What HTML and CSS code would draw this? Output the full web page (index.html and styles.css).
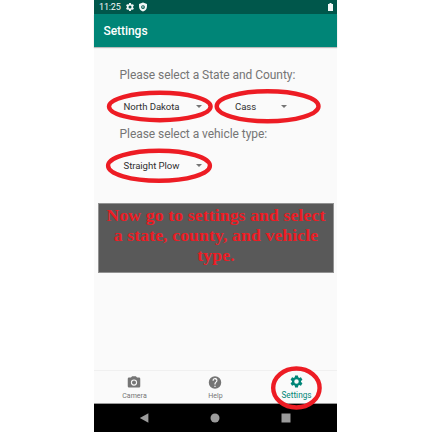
FILE: index.html
```html
<!DOCTYPE html>
<html lang="en">
<head>
<meta charset="utf-8">
<title>Settings</title>
<link rel="stylesheet" href="styles.css">
</head>
<body>
<svg class="defs" width="0" height="0" aria-hidden="true">
  <symbol id="gear" viewBox="0 0 24 24"><path d="M19.14 12.94c.04-.3.06-.61.06-.94 0-.32-.02-.64-.07-.94l2.03-1.58a.49.49 0 0 0 .12-.61l-1.92-3.32a.49.49 0 0 0-.59-.22l-2.39.96c-.5-.38-1.03-.7-1.62-.94l-.36-2.54a.48.48 0 0 0-.48-.41h-3.84a.47.47 0 0 0-.47.41l-.36 2.54c-.59.24-1.13.57-1.62.94l-2.39-.96a.48.48 0 0 0-.59.22L2.74 8.87a.47.47 0 0 0 .12.61l2.03 1.58c-.05.3-.09.63-.09.94s.02.64.07.94l-2.03 1.58a.49.49 0 0 0-.12.61l1.92 3.32c.12.22.37.29.59.22l2.39-.96c.5.38 1.03.7 1.62.94l.36 2.54c.05.24.24.41.48.41h3.84c.24 0 .44-.17.47-.41l.36-2.54c.59-.24 1.13-.56 1.62-.94l2.39.96c.22.08.47 0 .59-.22l1.92-3.32a.47.47 0 0 0-.12-.61zM12 15.6A3.6 3.6 0 1 1 12 8.4a3.6 3.6 0 0 1 0 7.2z"/></symbol>
</svg>
<div class="phone">
  <header class="status">
    <span class="time">11:25</span>
    <svg class="status-gear"><use href="#gear"/></svg>
    <svg class="shield" viewBox="0 0 24 24"><path fill-rule="evenodd" d="M12 1 2.500 4.500V11c0 5.600 3.800 10.700 9.500 12 5.700-1.300 9.500-6.400 9.500-12V4.500zM12 7.500a4.500 4.500 0 1 0 0 9 4.500 4.500 0 0 0 0-9zm-1.500 2L15 12l-4.500 2.500z"/></svg>
    <svg class="battery" viewBox="0 0 5 8"><path d="M1.500 0h2v1H5v7H0V1h1.500z"/></svg>
  </header>
  <div class="appbar"><h1>Settings</h1></div>
  <main class="content">
    <p class="prompt">Please select a State and County:</p>
    <div class="row">
      <div class="select state"><span>North Dakota</span><i class="caret"></i></div>
      <div class="select county"><span>Cass</span><i class="caret"></i></div>
    </div>
    <p class="prompt">Please select a vehicle type:</p>
    <div class="row">
      <div class="select plow"><span>Straight Plow</span><i class="caret"></i></div>
    </div>
    <div class="note"><span>Now go to settings and select</span><span>a state, county, and vehicle</span><span>type.</span></div>
  </main>
  <nav class="tabs">
    <div class="tab"><svg viewBox="0 0 24 24"><circle cx="12" cy="12" r="3.200"/><path d="M9 2 7.170 4H4a2 2 0 0 0-2 2v12a2 2 0 0 0 2 2h16a2 2 0 0 0 2-2V6a2 2 0 0 0-2-2h-3.170L15 2zm3 15a5 5 0 1 1 0-10 5 5 0 0 1 0 10z"/></svg><span>Camera</span></div>
    <div class="tab"><svg viewBox="0 0 24 24"><path d="M12 2a10 10 0 1 0 0 20 10 10 0 0 0 0-20zm1 17h-2v-2h2zm2.070-7.750-.9.920C13.450 12.900 13 13.500 13 15h-2v-.5c0-1.100.45-2.100 1.170-2.830l1.240-1.260A2 2 0 1 0 10 9H8a4 4 0 1 1 7.070 2.250z"/></svg><span>Help</span></div>
    <div class="tab active"><svg><use href="#gear"/></svg><span>Settings</span></div>
  </nav>
  <footer class="system">
    <svg viewBox="0 0 10 10"><path d="M9.400.3v9.400L.8 5z"/></svg>
    <svg viewBox="0 0 10 10"><circle cx="5" cy="5" r="4.500"/></svg>
    <svg viewBox="0 0 10 10"><path d="M.5.5h9v9h-9z"/></svg>
  </footer>
</div>
<svg class="marks" viewBox="0 0 432 432">
  <ellipse cx="159.800" cy="106.500" rx="50.800" ry="13.700"/>
  <ellipse cx="267.600" cy="106.200" rx="50.900" ry="15"/>
  <ellipse cx="159" cy="165.800" rx="50.900" ry="15"/>
  <ellipse cx="296.400" cy="388" rx="23.200" ry="19.500"/>
</svg>
</body>
</html>
```
FILE: styles.css
```css
* { box-sizing: border-box; margin: 0; padding: 0; }
body { width: 432px; height: 432px; overflow: hidden; background: #fff; font-family: Roboto, sans-serif; }
.defs { position: absolute; }
svg { fill: currentColor; display: block; }
.phone { width: 243px; height: 432px; margin-left: 94px; background: #fafafa; display: flex; flex-direction: column; }
.status { height: 14px; background: #00574b; color: #f4f8f7; display: flex; align-items: center; padding: 0 4.500px 0 5px; }
.time { font-size: 9px; line-height: 14px; width: 26px; letter-spacing: -.15px; }
.status-gear { width: 10px; height: 10px; margin-right: 3px; }
.shield { width: 10px; height: 10px; }
.battery { width: 5px; height: 8px; margin-left: auto; }
.appbar { height: 33px; background: #008577; color: #fff; padding-left: 9.500px; box-shadow: 0 1px 1px #bbb; }
h1 { font-size: 12px; font-weight: 500; line-height: 34px; letter-spacing: -.05px; }
.content { flex: 1; padding-top: 20px; }
.prompt { font-size: 12px; line-height: 16px; color: #757575; padding-left: 25.500px; white-space: nowrap; letter-spacing: -.055px; }
.row { display: flex; height: 43px; padding-left: 29.500px; }
.select { display: flex; align-items: center; justify-content: space-between; height: 46px; font-size: 9.600px; color: #303030; white-space: nowrap; letter-spacing: -.07px; }
.state { width: 78.500px; }
.plow { width: 78px; }
.county { width: 52px; margin-left: 33px; }
.caret { border: 3px solid transparent; border-top-color: #757575; border-bottom: 0; }
.note { width: 236px; height: 70px; margin: 18px 0 0 4px; padding-top: 1px; background: #595959; border: 1px solid #929292; color: #ed1c24; font: bold 17.600px/20px "Liberation Serif", serif; letter-spacing: .15px; display: flex; flex-direction: column; align-items: center; white-space: nowrap; }
.tabs { height: 34px; display: flex; border-top: 1px solid #f0f0f0; border-bottom: 1px solid #9a9a9a; color: #757575; }
.tab { flex: 1; display: flex; flex-direction: column; align-items: center; padding-top: 4px; font-size: 7px; line-height: 10px; letter-spacing: .04px; }
.tab svg { width: 15px; height: 15px; margin-bottom: 1px; transform: translateX(-.5px); }
.active { color: #008577; font-size: 8.200px; }
.tab.active svg { margin-top: -1px; transform: none; }
.system { height: 28px; background: #000; color: #9b9b9b; display: flex; align-items: center; justify-content: space-between; padding: 0 46px 0 45px; }
.system svg { width: 10px; height: 10px; }
.marks { position: absolute; left: 0; top: 0; width: 432px; height: 432px; fill: none; stroke: #ed1c24; stroke-width: 4.400; }
```
